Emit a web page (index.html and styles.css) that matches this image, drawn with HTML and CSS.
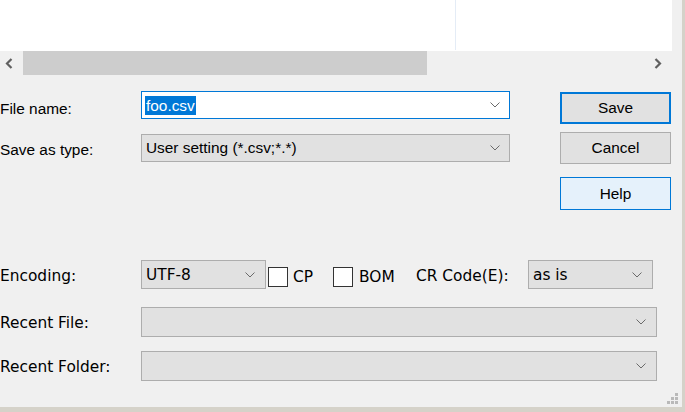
FILE: index.html
```html
<!DOCTYPE html>
<html>
<head>
<meta charset="utf-8">
<link rel="stylesheet" href="styles.css">
</head>
<body>
<div class="dialog">
  <div class="listpane">
    <div class="list"><div class="col1"></div></div>
    <div class="hscroll">
      <div class="sbtn sbtn-left"><svg width="8" height="11" viewBox="0 0 8 11"><polyline points="6.5,1 2,5.5 6.5,10" fill="none" stroke="#606060" stroke-width="2.2"/></svg></div>
      <div class="track"><div class="thumb"></div></div>
      <div class="sbtn sbtn-right"><svg width="8" height="11" viewBox="0 0 8 11"><polyline points="1.5,1 6,5.5 1.5,10" fill="none" stroke="#606060" stroke-width="2.2"/></svg></div>
    </div>
  </div>

  <div class="upper">
    <div class="fields">
      <div class="row row-name">
        <span class="lbl">File name:</span>
        <div class="combo edit"><span class="sel">foo.csv</span><svg class="chev" width="10" height="6" viewBox="0 0 10 6"><polyline points="0.5,0.5 5,5 9.5,0.5" fill="none" stroke="#6a6a6a" stroke-width="1"/></svg></div>
      </div>
      <div class="row row-type">
        <span class="lbl">Save as type:</span>
        <div class="combo"><span class="val">User setting (*.csv;*.*)</span><svg class="chev" width="10" height="6" viewBox="0 0 10 6"><polyline points="0.5,0.5 5,5 9.5,0.5" fill="none" stroke="#6a6a6a" stroke-width="1"/></svg></div>
      </div>
    </div>
    <div class="buttons">
      <div class="btn btn-default">Save</div>
      <div class="btn btn-cancel">Cancel</div>
      <div class="btn btn-help">Help</div>
    </div>
  </div>

  <div class="lower">
    <div class="lrow lrow-enc">
      <span class="llbl">Encoding:</span>
      <div class="combo combo-small"><span class="val">UTF-8</span><svg class="chev" width="10" height="6" viewBox="0 0 10 6"><polyline points="0.5,0.5 5,5 9.5,0.5" fill="none" stroke="#6a6a6a" stroke-width="1"/></svg></div>
      <div class="check check-cp"><span class="box"></span><span class="ctext">CP</span></div>
      <div class="check check-bom"><span class="box"></span><span class="ctext">BOM</span></div>
      <span class="crlbl">CR Code(E):</span>
      <div class="combo combo-small"><span class="val">as is</span><svg class="chev" width="10" height="6" viewBox="0 0 10 6"><polyline points="0.5,0.5 5,5 9.5,0.5" fill="none" stroke="#6a6a6a" stroke-width="1"/></svg></div>
    </div>
    <div class="lrow lrow-file">
      <span class="llbl">Recent File:</span>
      <div class="combo combo-wide"><svg class="chev" width="10" height="6" viewBox="0 0 10 6"><polyline points="0.5,0.5 5,5 9.5,0.5" fill="none" stroke="#6a6a6a" stroke-width="1"/></svg></div>
    </div>
    <div class="lrow lrow-folder">
      <span class="llbl">Recent Folder:</span>
      <div class="combo combo-wide"><svg class="chev" width="10" height="6" viewBox="0 0 10 6"><polyline points="0.5,0.5 5,5 9.5,0.5" fill="none" stroke="#6a6a6a" stroke-width="1"/></svg></div>
    </div>
  </div>

  <div class="grip">
    <span></span><span></span><span class="d"></span>
    <span></span><span class="d"></span><span class="d"></span>
    <span class="d"></span><span class="d"></span><span class="d"></span>
  </div>
</div>
</body>
</html>
```

FILE: styles.css
```css
html, body {
  margin: 0;
  padding: 0;
  background: #d5d2c9;
  width: 685px;
  height: 412px;
  overflow: hidden;
}

.dialog {
  position: relative;
  width: 682px;
  height: 407px;
  background: #f0f0f0;
  font-family: "Liberation Sans", Arial, sans-serif;
  font-size: 15.4px;
  color: #000;
}

/* list + scrollbar */
.listpane {
  width: 672px;
}
.list {
  height: 51px;
  background: #fff;
  display: flex;
}
.col1 {
  width: 455px;
  height: 50px;
  border-right: 1px solid #e4ecf6;
}
.hscroll {
  height: 24px;
  display: flex;
  background: #f0f0f0;
}
.sbtn {
  width: 23px;
  display: flex;
  align-items: center;
}
.sbtn-left svg { margin-left: 5px; }
.sbtn-right svg { margin-left: 5px; }
.track {
  flex: 1;
}
.thumb {
  width: 404px;
  height: 24px;
  background: #cdcdcd;
}

/* upper form */
.upper {
  display: flex;
  margin-top: 16px;
  height: 119px;
}
.fields {
  display: flex;
  flex-direction: column;
}
.row {
  display: flex;
  align-items: center;
  height: 28px;
}
.row-type {
  margin-top: 15px;
}
.lbl {
  width: 141px;
  padding-top: 3px;
}
.row-name .lbl {
  padding-top: 7px;
}
.combo {
  box-sizing: border-box;
  display: flex;
  align-items: center;
  background: #e1e1e1;
  border: 1px solid #adadad;
  padding: 0 9px 0 3px;
}
.row .combo {
  width: 369px;
  height: 28px;
}
.combo .chev {
  margin-left: auto;
  flex: none;
}
.edit {
  background: #fff;
  border-color: #0078d7;
}
.sel {
  background: #0078d7;
  color: #fff;
  line-height: 19px;
  padding: 0 1px;
}
.val {
  padding-left: 1px;
}

.buttons {
  margin-left: 50px;
  margin-top: 1px;
  width: 111px;
  display: flex;
  flex-direction: column;
}
.btn {
  box-sizing: border-box;
  height: 32px;
  display: flex;
  align-items: center;
  justify-content: center;
  background: #e1e1e1;
  border: 1px solid #adadad;
}
.btn-default {
  border: 2px solid #0078d7;
}
.btn-cancel {
  margin-top: 8px;
}
.btn-help {
  margin-top: 13px;
  height: 33px;
  background: #e5f1fb;
  border: 1px solid #0078d7;
}

/* lower form */
.lower {
  margin-top: 50px;
  font-family: "DejaVu Sans", Verdana, sans-serif;
  font-size: 15.4px;
}
.lrow {
  display: flex;
  align-items: center;
}
.lrow-enc {
  height: 29px;
}
.lrow-file {
  margin-top: 18px;
  height: 30px;
}
.lrow-folder {
  margin-top: 14px;
  height: 30px;
}
.llbl {
  width: 141px;
  padding-top: 2px;
}
.combo-small {
  width: 125px;
  height: 29px;
  padding-right: 10px;
}
.combo-wide {
  width: 516px;
  height: 30px;
  padding-right: 10px;
}
.check {
  display: flex;
  align-items: center;
}
.check-cp {
  margin-left: 2px;
  width: 65px;
}
.check-bom {
  width: 83px;
}
.box {
  box-sizing: border-box;
  width: 20px;
  height: 20px;
  background: #fff;
  border: 1px solid #333;
  margin-top: 4px;
}
.ctext {
  margin-left: 5px;
  padding-top: 4px;
}
.check-bom .ctext {
  margin-left: 6px;
}
.crlbl {
  width: 112px;
  padding-top: 2px;
}

.grip {
  position: absolute;
  right: 4px;
  bottom: 3px;
  display: grid;
  grid-template-columns: 3px 3px 3px;
  grid-template-rows: 3px 3px 3px;
  gap: 1px;
}
.grip span.d {
  background: #b9b9b9;
}
```
